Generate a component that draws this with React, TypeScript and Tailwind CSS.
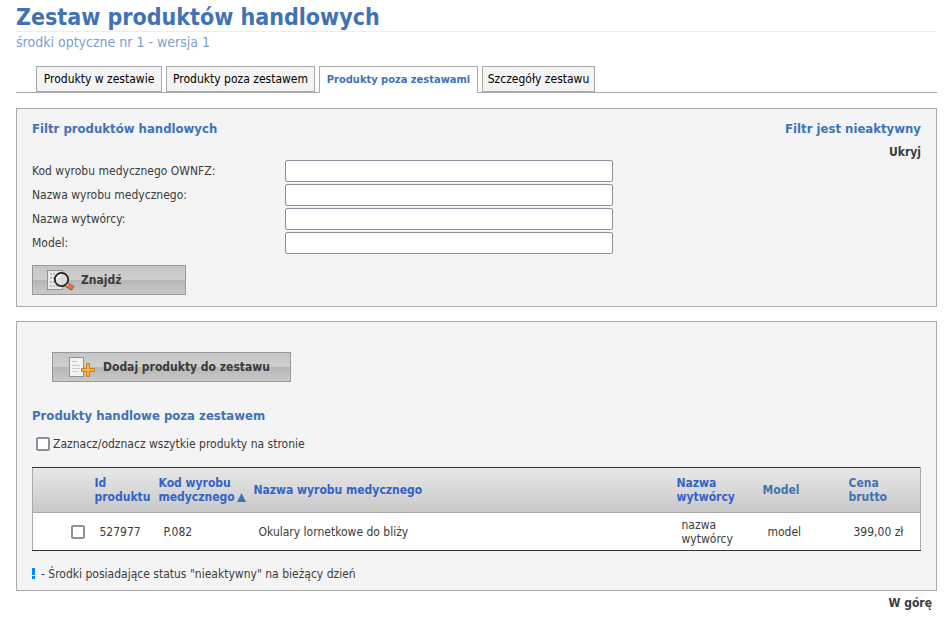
import React from 'react'

const tabs = [
  { label: 'Produkty w zestawie', width: 'w-[126px]' },
  { label: 'Produkty poza zestawem', width: 'w-[149px]' },
  { label: 'Produkty poza zestawami', width: 'w-[159px]', active: true },
  { label: 'Szczegóły zestawu', width: 'w-[113px]' },
]

const fields = [
  { id: 'kod', label: 'Kod wyrobu medycznego OWNFZ:' },
  { id: 'nazwa', label: 'Nazwa wyrobu medycznego:' },
  { id: 'wytworca', label: 'Nazwa wytwórcy:' },
  { id: 'model', label: 'Model:' },
]

const buttonStyle =
  'flex h-[30px] items-center border border-[#999] bg-[linear-gradient(to_bottom,#c6c6c6,#cfcfcf_50%,#b6b6b6_50%,#c9c9c9)] text-[12px] font-bold text-[#3b3b3b]'

const checkboxStyle =
  'block size-[14px] shrink-0 appearance-none rounded-[2px] border-2 border-[#8f8f9d] bg-white checked:bg-[#4173b4]'

const SearchIcon = () => (
  <svg width="30" height="24" viewBox="0 0 30 24" aria-hidden="true">
    <rect x="1.5" y="2.5" width="15" height="19" fill="#e9e9e9" stroke="#929292" />
    <path
      d="M4 6h5M4 10h5M4 14h5M4 18h9"
      stroke="#bdbdbd"
      strokeWidth="2"
      strokeDasharray="2 1"
    />
    <path d="M20.5 16.5l6.500 4" stroke="#8a5a44" strokeWidth="5" />
    <path d="M21.5 17l5 3" stroke="#f2703a" strokeWidth="3.500" />
    <path d="M19.500 15.500l2.500 1.500" stroke="#ddd" strokeWidth="3" />
    <circle cx="15.500" cy="11.500" r="6.700" fill="#dedede" fillOpacity=".9" stroke="#252525" strokeWidth="1.800" />
    <path d="M11 11.500a4.500 4.500 0 0 1 4.500-4.500" fill="none" stroke="#fafafa" strokeWidth="1.500" />
  </svg>
)

const AddIcon = () => (
  <svg width="30" height="24" viewBox="0 0 30 24" aria-hidden="true">
    <rect x="1.5" y="2.5" width="14" height="19" fill="#f3f3f3" stroke="#929292" />
    <path d="M4 6.500h5M4 10.500h8M4 13.500h8M4 16.500h6" stroke="#cbcbcb" />
    <path
      d="M18.500 8.500h3v5h5v3h-5v5h-3v-5h-5v-3h5z"
      fill="#fbb030"
      stroke="#c98022"
    />
  </svg>
)

const App = () => {
  return (
    <div className="pt-1 pr-[10px] pb-3 pl-4 font-['DejaVu_Sans_Condensed','DejaVu_Sans',sans-serif] text-[12px] leading-[14px] text-[#3b3b3b]">
      <header>
        <h1 className="border-b border-[#eee] text-[23px] leading-[27px] font-bold text-[#4173b4]">
          Zestaw produktów handlowych
        </h1>
        <p className="pt-px text-[14px] leading-[18px] text-[#7b9fcf]">
          środki optyczne nr 1 - wersja 1
        </p>
      </header>

      {/* Tabs */}
      <nav className="mt-[15px] flex items-end gap-1 border-b border-[#aaa] pl-5">
        {tabs.map((tab) =>
          tab.active ? (
            <a
              key={tab.label}
              href="#"
              aria-current="page"
              className={`${tab.width} -mb-px flex h-[27px] items-center justify-center border border-b-0 border-[#aaa] bg-white text-[11px] font-bold whitespace-nowrap text-[#4173b4]`}
            >
              {tab.label}
            </a>
          ) : (
            <a
              key={tab.label}
              href="#"
              className={`${tab.width} flex h-[26px] items-center justify-center border border-[#aaa] bg-[#f4f4f4] whitespace-nowrap text-black`}
            >
              {tab.label}
            </a>
          ),
        )}
      </nav>

      {/* Filter */}
      <section className="mt-[15px] border border-[#aaa] bg-[#f4f4f4] px-[15px] pt-3 pb-[11px]">
        <div className="flex justify-between text-[13px] leading-4 font-bold text-[#4173b4]">
          <h2>Filtr produktów handlowych</h2>
          <span>Filtr jest nieaktywny</span>
        </div>
        <div className="mt-2 flex justify-end">
          <button type="button" className="h-[14px] font-bold">
            Ukryj
          </button>
        </div>
        <form>
          {fields.map((field) => (
            <div key={field.id} className="flex h-6 items-center">
              <label htmlFor={field.id} className="w-[253px]">
                {field.label}
              </label>
              <input
                id={field.id}
                type="text"
                className="h-[22px] w-[328px] rounded-[2px] border border-[#8f8f9d] bg-white px-1"
              />
            </div>
          ))}
          <button type="button" className={`${buttonStyle} mt-[10px] w-[154px] gap-[5px] pl-[13px]`}>
            <SearchIcon />
            Znajdź
          </button>
        </form>
      </section>

      {/* Products */}
      <section className="mt-[14px] border border-[#aaa] bg-[#f4f4f4] px-[15px] pt-[30px] pb-2">
        <button type="button" className={`${buttonStyle} ml-5 w-[239px] gap-[5px] pl-[15px]`}>
          <AddIcon />
          Dodaj produkty do zestawu
        </button>
        <h2 className="mt-[26px] text-[13px] leading-4 font-bold text-[#4173b4]">
          Produkty handlowe poza zestawem
        </h2>
        <label className="mt-3 flex h-4 items-center gap-[3px] pl-1">
          <input type="checkbox" className={checkboxStyle} />
          Zaznacz/odznacz wszytkie produkty na stronie
        </label>

        <table className="mt-[15px] w-full table-fixed border-collapse border-x border-y border-x-[#aaa] border-y-[#333] bg-white text-left">
          <colgroup>
            <col className="w-[62px]" />
            <col className="w-16" />
            <col className="w-[95px]" />
            <col />
            <col className="w-[86px]" />
            <col className="w-[86px]" />
            <col className="w-[72px]" />
          </colgroup>
          <thead>
            <tr className="h-[45px] border-b border-[#aaa] bg-linear-to-b from-[#e8e8e8] to-[#c9c9c9] text-[#3463c8]">
              <th></th>
              <th>
                <a href="#">Id produktu</a>
              </th>
              <th>
                <a href="#">
                  Kod wyrobu
                  <span className="flex items-center gap-[2px]">
                    medycznego
                    <svg width="9" height="9" viewBox="0 0 9 9" aria-hidden="true">
                      <path d="M4.500 0L9 9H0z" fill="#4173b4" />
                    </svg>
                  </span>
                </a>
              </th>
              <th>
                <a href="#">Nazwa wyrobu medycznego</a>
              </th>
              <th>
                <a href="#">Nazwa wytwórcy</a>
              </th>
              <th className="text-[#4173b4]">Model</th>
              <th className="text-[#4173b4]">Cena brutto</th>
            </tr>
          </thead>
          <tbody>
            <tr className="h-[38px]">
              <td className="pl-[38px]">
                <input type="checkbox" aria-label="527977" className={checkboxStyle} />
              </td>
              <td className="pl-[5px]">527977</td>
              <td className="pl-[5px]">P.082</td>
              <td className="pl-[5px]">Okulary lornetkowe do bliży</td>
              <td className="pl-[5px]">nazwa wytwórcy</td>
              <td className="pl-[5px]">model</td>
              <td className="pl-[5px] whitespace-nowrap">399,00 zł</td>
            </tr>
          </tbody>
        </table>

        <p className="mt-[15px] flex h-4 items-center gap-[5px]">
          <svg width="4" height="12" viewBox="0 0 4 12" aria-hidden="true">
            <path d="M0 0h3v7H0zM0 8h3v3H0z" fill="#0a84ff" />
          </svg>
          - Środki posiadające status "nieaktywny" na bieżący dzień
        </p>
      </section>

      <div className="mt-[5px] flex justify-end pr-[5px]">
        <a href="#" className="font-bold">
          W górę
        </a>
      </div>
    </div>
  )
}

export default App
